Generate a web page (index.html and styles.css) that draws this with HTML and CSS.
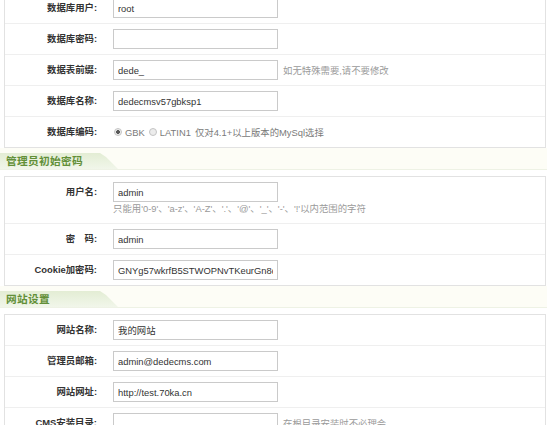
FILE: index.html
```html
<!DOCTYPE html>
<html lang="zh-CN">
<head>
<meta charset="utf-8">
<title>DedeCMS 安装</title>
<link rel="stylesheet" href="styles.css">
</head>
<body>
<div class="viewport">
  <div class="page">
    <div class="panel">
      <div class="row">
        <div class="label">数据库用户:</div>
        <div class="field"><input class="txt" type="text" value="root"></div>
      </div>
      <div class="row">
        <div class="label">数据库密码:</div>
        <div class="field"><input class="txt" type="text" value=""></div>
      </div>
      <div class="row">
        <div class="label">数据表前缀:</div>
        <div class="field"><input class="txt" type="text" value="dede_"><span class="hint">如无特殊需要,请不要修改</span></div>
      </div>
      <div class="row">
        <div class="label">数据库名称:</div>
        <div class="field"><input class="txt" type="text" value="dedecmsv57gbksp1"></div>
      </div>
      <div class="row">
        <div class="label">数据库编码:</div>
        <div class="field radios">
          <label class="opt"><input class="rd" type="radio" name="enc" checked>GBK</label>
          <label class="opt"><input class="rd" type="radio" name="enc">LATIN1</label>
          <span class="note">仅对4.1+以上版本的MySql选择</span>
        </div>
      </div>
    </div>

    <div class="section"><span class="tab">管理员初始密码</span></div>

    <div class="panel">
      <div class="row">
        <div class="label">用户名:</div>
        <div class="field stack">
          <input class="txt" type="text" value="admin">
          <span class="hint under">只能用'0-9'、'a-z'、'A-Z'、'.'、'@'、'_'、'-'、'!'以内范围的字符</span>
        </div>
      </div>
      <div class="row">
        <div class="label">密&emsp;码:</div>
        <div class="field"><input class="txt" type="text" value="admin"></div>
      </div>
      <div class="row">
        <div class="label">Cookie加密码:</div>
        <div class="field"><input class="txt" type="text" value="GNYg57wkrfB5STWOPNvTKeurGn8qLmT2"></div>
      </div>
    </div>

    <div class="section"><span class="tab">网站设置</span></div>

    <div class="panel">
      <div class="row">
        <div class="label">网站名称:</div>
        <div class="field"><input class="txt" type="text" value="我的网站"></div>
      </div>
      <div class="row">
        <div class="label">管理员邮箱:</div>
        <div class="field"><input class="txt" type="text" value="admin@dedecms.com"></div>
      </div>
      <div class="row">
        <div class="label">网站网址:</div>
        <div class="field"><input class="txt" type="text" value="http://test.70ka.cn"></div>
      </div>
      <div class="row">
        <div class="label">CMS安装目录:</div>
        <div class="field"><input class="txt" type="text" value=""><span class="hint">在根目录安装时不必理会</span></div>
      </div>
    </div>
  </div>
</div>
</body>
</html>
```

FILE: styles.css
```css
html, body {
  margin: 0;
  padding: 0;
  background: #ffffff;
}

body {
  font-family: "Liberation Sans", "Noto Sans CJK SC", sans-serif;
  font-size: 9.4px;
  color: #333333;
}

.viewport {
  height: 425px;
  overflow: hidden;
}

.page {
  margin-top: -8px;
}

.panel {
  margin: 0 1px 0 4px;
  border: 1px solid #e2e2e2;
  background: #ffffff;
}

.row {
  display: grid;
  grid-template-columns: 96px 1fr;
  border-bottom: 1px solid #efefef;
}

.row:last-child {
  border-bottom: none;
}

.label {
  text-align: right;
  padding: 5px 4px 0 0;
  line-height: 20px;
  font-weight: bold;
  color: #333333;
  white-space: nowrap;
}

.field {
  display: flex;
  align-items: center;
  padding: 5px 0 5px 12px;
  min-height: 20px;
}

.field.stack {
  flex-direction: column;
  align-items: flex-start;
  padding-bottom: 8px;
}

.txt {
  box-sizing: border-box;
  width: 165px;
  height: 20px;
  margin: 0;
  padding: 0 4px;
  border: 1px solid #cacaca;
  background: #ffffff;
  font-family: "Liberation Sans", "Noto Sans CJK SC", sans-serif;
  font-size: 9.4px;
  color: #333333;
  outline: none;
}

.hint {
  margin-left: 5px;
  color: #9a9a9a;
  white-space: nowrap;
}

.hint.under {
  margin-left: 0;
  line-height: 13px;
}

.radios {
  color: #7a7a7a;
}

.opt {
  display: inline-flex;
  align-items: center;
  margin-right: 3px;
}

.rd {
  -webkit-appearance: none;
  appearance: none;
  box-sizing: border-box;
  width: 8px;
  height: 8px;
  margin: 0 3px 0 1px;
  border: 1px solid #c4c4c4;
  border-radius: 50%;
  background: #ececec;
}

.rd:checked {
  background: radial-gradient(circle, #5a5a5a 0 1.6px, #ececec 2.2px);
}

.note {
  margin-left: 1px;
}

.section {
  height: 21px;
  margin: 0 0 6px 0;
  background: #fdfdf6;
  border-bottom: 1px solid #eef2e5;
  display: flex;
  align-items: flex-end;
}

.tab {
  box-sizing: border-box;
  width: 118px;
  height: 16px;
  padding-left: 6px;
  line-height: 16px;
  font-size: 10.7px;
  font-weight: bold;
  color: #628f38;
  background: linear-gradient(#e3edd4, #f1f6ea);
  clip-path: polygon(0 0, 100px 0, 106px 25%, 118px 100%, 0 100%);
  letter-spacing: 0.3px;
}
```
